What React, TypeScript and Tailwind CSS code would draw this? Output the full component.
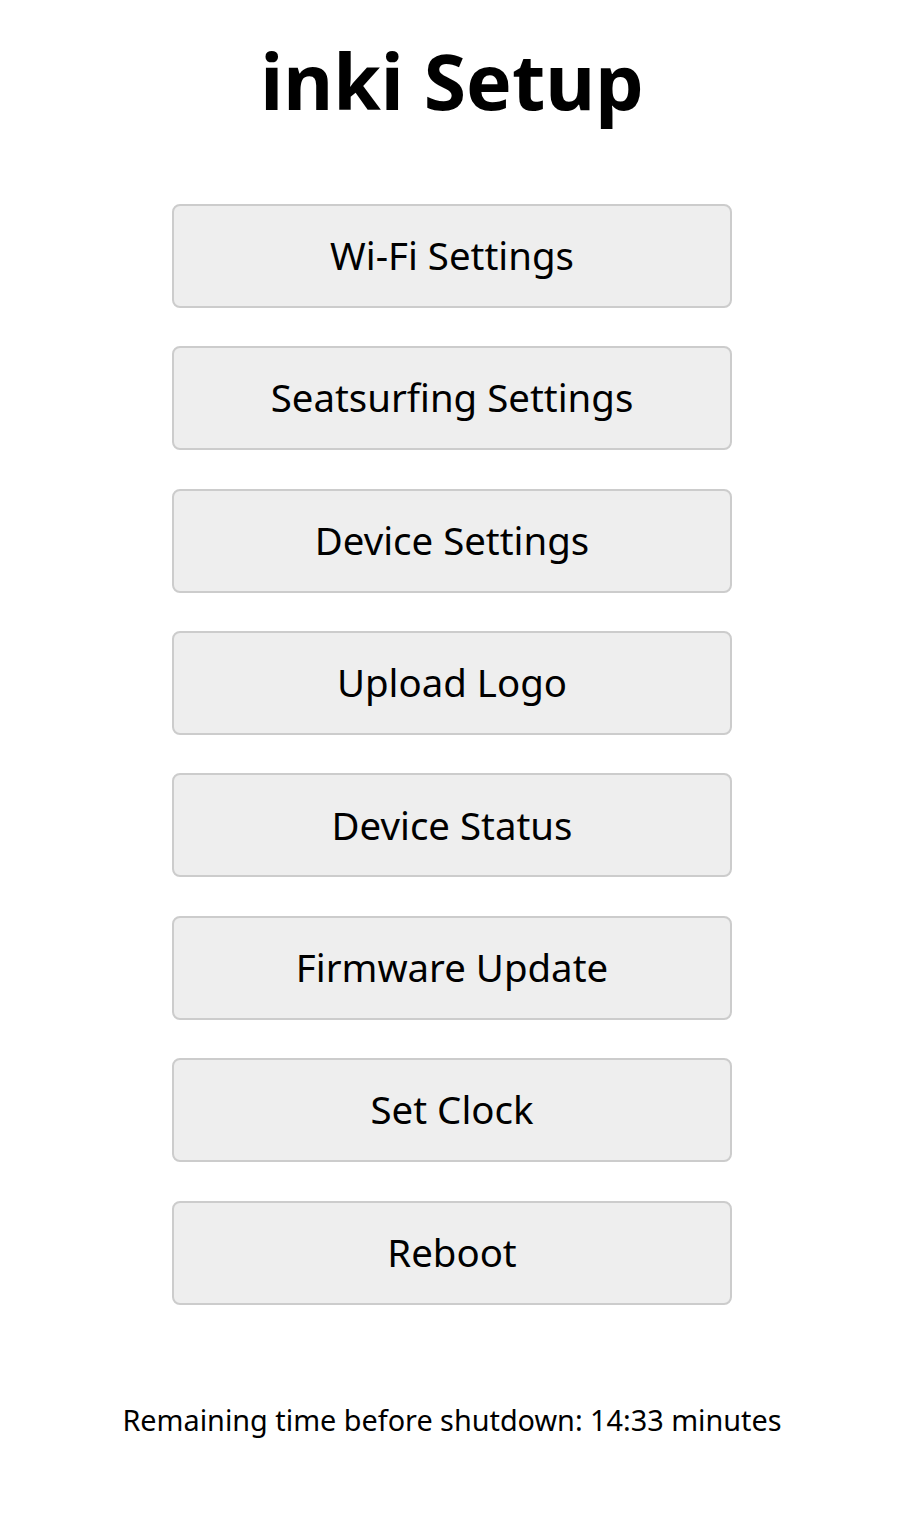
const ITEMS = [
  "Wi-Fi Settings",
  "Seatsurfing Settings",
  "Device Settings",
  "Upload Logo",
  "Device Status",
  "Firmware Update",
  "Set Clock",
  "Reboot",
];

export default function App() {
  return (
    <div
      className="min-h-screen bg-white text-black flex flex-col items-center pl-[2px]"
      style={{ fontFamily: '"Noto Sans", "Open Sans", sans-serif' }}
    >
      <h1 className="text-[76.8px] font-bold leading-none mt-[43px] mb-[84px]">inki Setup</h1>

      <div className="flex flex-col gap-[38.4px] w-[560px]">
        {ITEMS.map((label) => (
          <button
            key={label}
            className="h-[104px] w-full rounded-lg border-2 border-[#cccccc] bg-[#eeeeee] text-[38.4px] text-black"
          >
            {label}
          </button>
        ))}
      </div>

      <p className="text-[28.8px] mt-[93px]">Remaining time before shutdown: 14:33 minutes</p>
    </div>
  );
}
